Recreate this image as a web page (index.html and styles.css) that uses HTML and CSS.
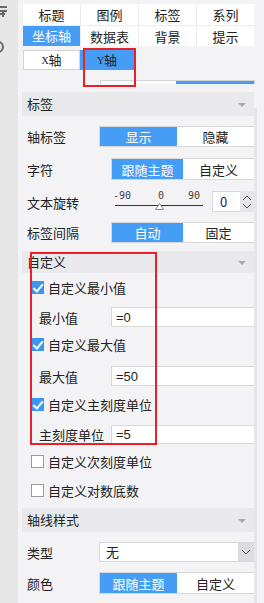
FILE: index.html
```html
<!DOCTYPE html>
<html lang="zh">
<head>
	<meta charset="UTF-8">
	<title>坐标轴</title>
	<link rel="stylesheet" href="styles.css">
</head>
<body>
<div class="side">
	<svg class="sicon" width="8" height="12" viewBox="0 0 8 12"><path d="M0 1h7M0 5h7M3 5v6M0 8h5" stroke="#6a6a6a" stroke-width="2" fill="none"/></svg>
	<svg class="sicon2" width="8" height="12" viewBox="0 0 8 12"><path d="M0 1a5 5 0 1 1 0 10" stroke="#6a6a6a" stroke-width="2" fill="none"/></svg>
</div>
<div class="main">
	<div class="tabs">
		<div class="tab">标题</div>
		<div class="tab">图例</div>
		<div class="tab">标签</div>
		<div class="tab">系列</div>
		<div class="tab on">坐标轴</div>
		<div class="tab">数据表</div>
		<div class="tab">背景</div>
		<div class="tab">提示</div>
	</div>
	<div class="axis">
		<div class="atab"><span class="en">X</span>轴</div>
		<div class="atab on"><span class="en">Y</span>轴</div>
	</div>
	<div class="bar"><div class="bar-w"></div><div class="bar-b"></div></div>

	<div class="head">标签<i class="tri"></i></div>
	<div class="row r1">
		<span class="lab">轴标签</span>
		<div class="seg w155"><span class="on">显示</span><span>隐藏</span></div>
	</div>
	<div class="row r2">
		<span class="lab">字符</span>
		<div class="seg w143"><span class="on">跟随主题</span><span>自定义</span></div>
	</div>
	<div class="row r3">
		<span class="lab">文本旋转</span>
		<div class="slider">
			<span class="n n1">-90</span><span class="n n2">0</span><span class="n n3">90</span>
			<div class="line"></div>
			<svg class="thumb" width="9" height="7" viewBox="0 0 9 7"><path d="M4.5 0.5L8.5 6.5H0.5Z" fill="#fff" stroke="#888"/></svg>
		</div>
		<div class="spin">
			<div class="spin-in">0</div>
			<div class="spin-btn">
				<svg width="10" height="8" viewBox="0 0 10 8"><path d="M1 6l4-4 4 4" stroke="#555" fill="none"/></svg>
				<svg width="10" height="8" viewBox="0 0 10 8"><path d="M1 2l4 4 4-4" stroke="#555" fill="none"/></svg>
			</div>
		</div>
	</div>
	<div class="row r4">
		<span class="lab">标签间隔</span>
		<div class="seg w143"><span class="on">自动</span><span>固定</span></div>
	</div>

	<div class="head h2">自定义<i class="tri"></i></div>
	<div class="chk c1"><i class="box on"></i>自定义最小值</div>
	<div class="row inrow i1"><span class="lab sub">最小值</span><div class="inp">=0</div></div>
	<div class="chk c2"><i class="box on"></i>自定义最大值</div>
	<div class="row inrow i2"><span class="lab sub">最大值</span><div class="inp">=50</div></div>
	<div class="chk c3"><i class="box on"></i>自定义主刻度单位</div>
	<div class="row inrow i3"><span class="lab sub">主刻度单位</span><div class="inp">=5</div></div>
	<div class="chk c4"><i class="box"></i>自定义次刻度单位</div>
	<div class="chk c5"><i class="box"></i>自定义对数底数</div>

	<div class="head h3">轴线样式<i class="tri"></i></div>
	<div class="row r5">
		<span class="lab">类型</span>
		<div class="sel"><span class="sel-t">无</span><span class="sel-a"><svg width="10" height="8" viewBox="0 0 10 8"><path d="M1 2l4 4 4-4" stroke="#555" fill="none"/></svg></span></div>
	</div>
	<div class="row r6">
		<span class="lab">颜色</span>
		<div class="seg w155"><span class="on">跟随主题</span><span>自定义</span></div>
	</div>
</div>
<div class="scroll"><div class="track"></div></div>

<div class="mark mark1"></div>
<div class="mark mark2"></div>
</body>
</html>
```

FILE: styles.css
```css
body{
	margin: 0;
	width: 264px;
	height: 603px;
	overflow: hidden;
	display: flex;
	background: #f3f3f5;
	font-family: "Noto Sans CJK SC", "Microsoft YaHei", sans-serif;
	font-size: 13px;
	line-height: 19px;
	color: #222;
}
.side{
	width: 18px;
	height: 603px;
	background: #e6e6e7;
	position: relative;
}
.sicon{
	position: absolute;
	left: 0;
	top: 6px;
}
.sicon2{
	position: absolute;
	left: -2px;
	top: 41px;
}
.main{
	width: 232px;
	padding-left: 4px;
}
.scroll{
	width: 10px;
}
.track{
	margin-top: 108px;
	width: 3px;
	height: 495px;
	background: #e6e6e8;
}

/* top tabs */
.tabs{
	margin: 4px 0 0 1px;
	width: 231px;
	display: grid;
	grid-template-columns: repeat(4, 1fr);
	grid-template-rows: 21px 20px;
	gap: 1px;
	background: #ececee;
}
.tab{
	background: #fff;
	text-align: center;
	line-height: 21px;
}
.tab.on{
	background: #459df5;
	color: #fff;
	line-height: 20px;
}
.axis{
	margin: 4px 0 0 1px;
	display: flex;
	height: 20px;
}
.atab{
	width: 55px;
	height: 18px;
	line-height: 18px;
	background: #fff;
	border: 1px solid #d4d4d6;
	text-align: center;
}
.atab.on{
	width: 54px;
	height: 20px;
	line-height: 20px;
	border: none;
	background: #459df5;
}
.en{
	font-family: "Liberation Serif", serif;
	font-size: 10px;
	vertical-align: 1px;
}
.bar{
	margin: 10px 0 0 78px;
	width: 153px;
	height: 3px;
	display: flex;
	border: 1px solid #d4d4d6;
	border-bottom: none;
}
.bar-w{
	width: 75px;
	background: #fff;
}
.bar-b{
	flex: 1;
	background: #459df5;
}

/* section headers */
.head{
	margin-top: 8px;
	height: 24px;
	line-height: 24px;
	padding-left: 5px;
	background: #e9e9eb;
	position: relative;
}
.head.h2{
	height: 22px;
	line-height: 22px;
}
.tri{
	position: absolute;
	right: 8px;
	top: 11px;
	border-left: 4px solid transparent;
	border-right: 4px solid transparent;
	border-top: 4px solid #aaa;
}
.h2 .tri{
	top: 10px;
}

/* rows */
.row{
	display: flex;
	align-items: center;
	padding-left: 5px;
}
.lab{
	flex: 1;
}
.lab.sub{
	padding-left: 12px;
}
.r1{ margin-top: 10px; height: 21px; }
.r2{ margin-top: 11px; height: 22px; }
.r3{ margin-top: 6px; height: 26px; align-items: flex-end; }
.r3 .lab{ align-self: center; margin-top: 6px; }
.r4{ margin-top: 10px; height: 21px; }
.r5{ margin-top: 10px; height: 20px; }
.r6{ margin-top: 10px; height: 22px; }

.seg{
	display: flex;
	height: 100%;
	box-sizing: border-box;
	border: 1px solid #d8d8da;
	border-right: none;
	background: #fff;
}
.seg span{
	flex: 1;
	text-align: center;
	display: flex;
	align-items: center;
	justify-content: center;
}
.seg .on{
	background: #459df5;
	color: #fff;
}
.w155{ width: 155px; }
.w143{ width: 143px; }

/* slider */
.slider{
	width: 92px;
	height: 26px;
	position: relative;
	margin-right: 7px;
}
.n{
	position: absolute;
	top: 5px;
	font-family: "DejaVu Sans Mono", monospace;
	font-size: 10px;
	color: #444;
	line-height: 10px;
}
.n1{ left: 0; }
.n2{ left: 45px; }
.n3{ left: 75px; }
.line{
	position: absolute;
	left: 2px;
	right: 2px;
	top: 19px;
	height: 1px;
	background: #333;
}
.thumb{
	position: absolute;
	left: 42px;
	top: 17px;
}
.spin{
	width: 42px;
	height: 21px;
	display: flex;
}
.spin-in{
	border: 1px solid #d8d8da;
	border-right: none;
	background: #fff;
	padding-left: 7px;
	box-sizing: border-box;
	width: 28px;
	line-height: 19px;
	color: #1a1a6e;
}
.spin-btn{
	flex: 1;
	background: #e6e6e8;
	display: flex;
	flex-direction: column;
	justify-content: center;
	align-items: center;
}

/* custom checkboxes */
.chk{
	display: flex;
	align-items: center;
	height: 20px;
	padding-left: 9px;
}
.c1{ margin-top: 4px; }
.c2{ margin-top: 7px; }
.c3{ margin-top: 8px; }
.c4{ margin-top: 7px; }
.c5{ margin-top: 9px; }
.box{
	width: 11px;
	height: 11px;
	border: 1px solid #9a9a9a;
	background: #fff;
	margin-right: 4px;
	position: relative;
}
.box.on{
	width: 13px;
	height: 13px;
	border: none;
	background: #3d96f1;
}
.box.on::after{
	content: "";
	position: absolute;
	left: 4px;
	top: 1px;
	width: 4px;
	height: 8px;
	border-right: 2px solid #fff;
	border-bottom: 2px solid #fff;
	transform: rotate(40deg);
}
.inrow{ height: 20px; }
.i1{ margin-top: 10px; }
.i2{ margin-top: 12px; }
.i3{ margin-top: 11px; height: 19px; }
.inp{
	width: 143px;
	height: 100%;
	box-sizing: border-box;
	border: 1px solid #d8d8da;
	border-right: none;
	background: #fff;
	padding-left: 4px;
	display: flex;
	align-items: center;
	font-family: "Liberation Sans", sans-serif;
}
.h3{ margin-top: 8px; }

/* select */
.sel{
	width: 155px;
	height: 20px;
	display: flex;
	box-sizing: border-box;
	border: 1px solid #d8d8da;
	border-right: none;
	background: #fff;
}
.sel-t{
	flex: 1;
	padding-left: 6px;
	line-height: 18px;
}
.sel-a{
	width: 16px;
	background: #dcdcde;
	display: flex;
	align-items: center;
	justify-content: center;
}

/* red annotation boxes */
.mark{
	position: absolute;
	border: 2px solid #e8202a;
	box-sizing: border-box;
}
.mark1{
	left: 83px;
	top: 48px;
	width: 53px;
	height: 39px;
}
.mark2{
	left: 30px;
	top: 252px;
	width: 127px;
	height: 193px;
}
```
